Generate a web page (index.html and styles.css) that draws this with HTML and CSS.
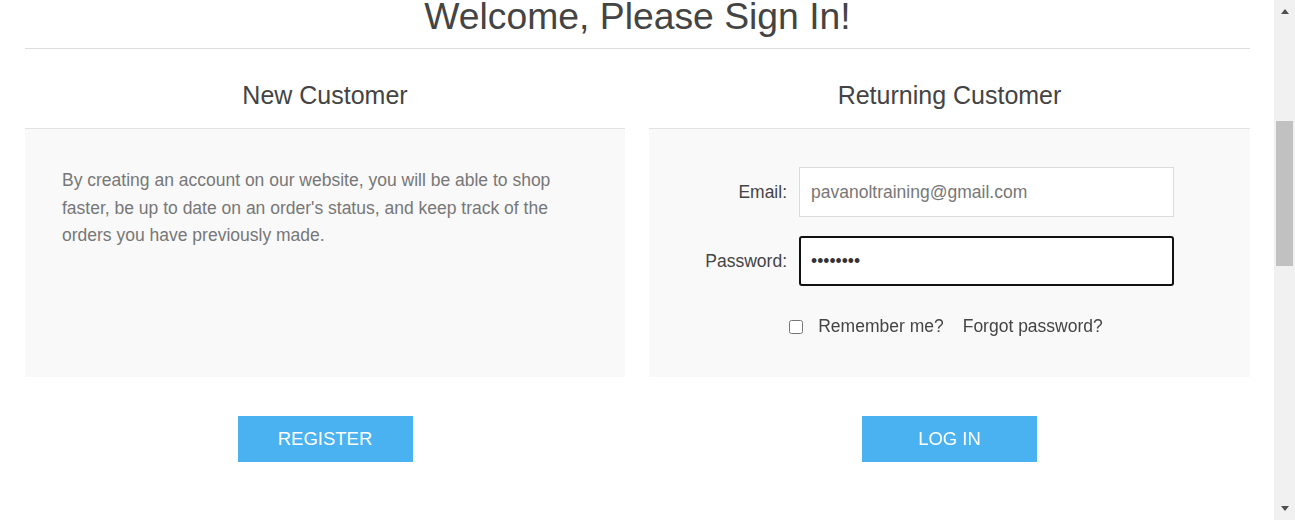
FILE: index.html
```html
<!DOCTYPE html>
<html lang="en">
<head>
<meta charset="utf-8">
<title>Sign In</title>
<link rel="stylesheet" href="styles.css">
</head>
<body>
<div class="window">
  <main class="page">
    <div class="page-title"><h1>Welcome, Please Sign In!</h1></div>
    <div class="columns">
      <section class="col">
        <h2 class="col-title">New Customer</h2>
        <div class="panel panel-text">
          <p>By creating an account on our website, you will be able to shop faster, be up to date on an order's status, and keep track of the orders you have previously made.</p>
        </div>
        <div class="actions"><button class="btn" type="button">Register</button></div>
      </section>
      <section class="col">
        <h2 class="col-title">Returning Customer</h2>
        <div class="panel panel-form">
          <div class="form-grid">
            <label class="form-label" for="email">Email:</label>
            <input class="form-input" id="email" type="text" value="pavanoltraining@gmail.com">
            <label class="form-label" for="pwd">Password:</label>
            <input class="form-input focused" id="pwd" type="password" value="12345678" autofocus>
          </div>
          <div class="remember-row">
            <input class="check" type="checkbox" id="rem">
            <label class="remember-label" for="rem">Remember me?</label>
            <a class="forgot" href="#">Forgot password?</a>
          </div>
        </div>
        <div class="actions"><button class="btn" type="button">Log in</button></div>
      </section>
    </div>
  </main>
  <div class="scrollbar">
    <div class="sb-arrow sb-up"></div>
    <div class="sb-track"><div class="sb-thumb"></div></div>
    <div class="sb-arrow sb-down"></div>
  </div>
</div>
</body>
</html>
```

FILE: styles.css
```css
html, body {
  margin: 0;
  padding: 0;
  background: #fff;
  height: 520px;
  overflow: hidden;
}

body {
  font-family: "Liberation Sans", Arial, sans-serif;
  color: #444;
}

.window {
  display: flex;
  height: 520px;
}

.page {
  flex: 1;
  padding: 0 24px 0 25px;
  min-width: 0;
}

.page-title h1 {
  margin: -2px 0 0;
  padding-bottom: 13px;
  border-bottom: 1px solid #dedede;
  font-size: 37.3px;
  line-height: 37px;
  font-weight: normal;
  text-align: center;
  color: #444;
}

.columns {
  display: grid;
  grid-template-columns: 600px 601px;
  column-gap: 24px;
}

.col {
  display: flex;
  flex-direction: column;
}

.col-title {
  margin: 0;
  padding: 31px 0 18px;
  font-size: 25px;
  line-height: 30px;
  font-weight: normal;
  text-align: center;
  color: #444;
}

.panel {
  flex: 1;
  background: #f9f9f9;
  border-top: 1px solid #e2e2e2;
}

.panel-text p {
  margin: 0;
  padding: 38px 37px 36px;
  font-size: 17.5px;
  line-height: 27.5px;
  color: #777;
}

.panel-form {
  padding: 38px 0 37px;
}

.form-grid {
  display: grid;
  grid-template-columns: 138px 375px;
  column-gap: 12px;
  row-gap: 19px;
  align-items: center;
}

.form-label {
  text-align: right;
  font-size: 17.5px;
  color: #444;
}

.form-input {
  box-sizing: border-box;
  width: 375px;
  height: 50px;
  margin: 0;
  padding: 0 11px;
  border: 1px solid #dcdcdc;
  border-radius: 0;
  background: #fff;
  font-family: "Liberation Sans", Arial, sans-serif;
  font-size: 17.5px;
  color: #777;
  outline: none;
}

.form-input.focused {
  border: 2px solid #111;
  border-radius: 3px;
  padding: 0 10px;
  color: #333;
  caret-color: #111;
}

.form-input.focused:focus {
  outline: none;
}

.remember-row {
  display: flex;
  justify-content: center;
  align-items: center;
  margin-top: 27px;
  height: 27px;
  font-size: 17.5px;
  color: #444;
  padding-right: 7px;
}

.check {
  width: 14px;
  height: 14px;
  margin: 0 15px 0 0;
}

.remember-label {
  margin-right: 19px;
}

.forgot {
  color: #444;
  text-decoration: none;
}

.actions {
  display: flex;
  justify-content: center;
  padding-top: 39px;
}

.btn {
  width: 175px;
  height: 46px;
  border: none;
  background: #4ab2f1;
  color: #fff;
  font-family: "Liberation Sans", Arial, sans-serif;
  font-size: 18.5px;
  text-transform: uppercase;
  cursor: pointer;
}

.scrollbar {
  width: 21px;
  flex: none;
  height: 520px;
  background: #f1f1f1;
  display: flex;
  flex-direction: column;
  align-items: center;
}

.sb-arrow {
  width: 0;
  height: 0;
  border-left: 4px solid transparent;
  border-right: 4px solid transparent;
}

.sb-up {
  margin-top: 9px;
  border-bottom: 5px solid #505050;
}

.sb-down {
  margin-bottom: 9px;
  border-top: 5px solid #505050;
}

.sb-track {
  flex: 1;
  width: 17px;
}

.sb-thumb {
  margin-top: 107px;
  height: 145px;
  background: #c1c1c1;
}
```
